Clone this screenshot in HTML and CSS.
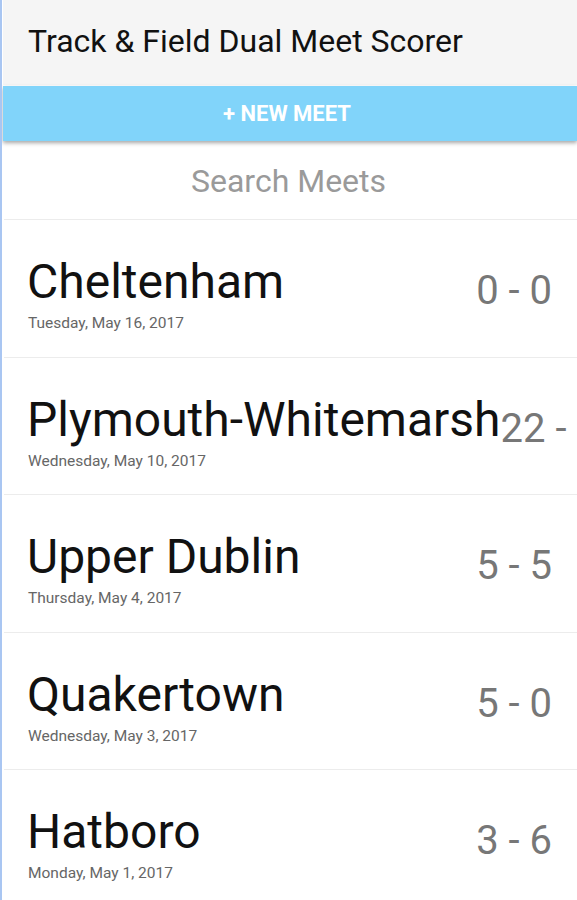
FILE: index.html
```html
<!DOCTYPE html>
<html>
<head>
<meta charset="utf-8">
<link rel="stylesheet" href="styles.css">
</head>
<body>
<div class="app">
  <header class="topbar"><h1 class="title">Track &amp; Field Dual Meet Scorer</h1></header>
  <div class="newmeet">+ NEW MEET</div>
  <div class="search">Search Meets</div>
  <ul class="meets">
    <li class="meet"><div class="info"><div class="name">Cheltenham</div><div class="date">Tuesday, May 16, 2017</div></div><div class="score">0 - 0</div></li>
    <li class="meet"><div class="info"><div class="name">Plymouth-Whitemarsh</div><div class="date">Wednesday, May 10, 2017</div></div><div class="score">22 - 13</div></li>
    <li class="meet"><div class="info"><div class="name">Upper Dublin</div><div class="date">Thursday, May 4, 2017</div></div><div class="score">5 - 5</div></li>
    <li class="meet"><div class="info"><div class="name">Quakertown</div><div class="date">Wednesday, May 3, 2017</div></div><div class="score">5 - 0</div></li>
    <li class="meet"><div class="info"><div class="name">Hatboro</div><div class="date">Monday, May 1, 2017</div></div><div class="score">3 - 6</div></li>
  </ul>
</div>
</body>
</html>
```
FILE: styles.css
```css
html, body { margin: 0; padding: 0; background: #fff; }
body { font-family: Roboto, "Noto Sans", sans-serif; width: 577px; height: 900px; overflow: hidden; }
.app { border-left: 2px solid #a9c6f2; padding-left: 1px; min-height: 900px; overflow: hidden; }
.topbar { height: 85px; background: #f5f5f5; display: flex; align-items: center; padding-left: 25px; }
.title { margin: 0; font-weight: 400; font-size: 32px; color: #111; padding-bottom: 3px; }
.newmeet { height: 55px; margin-top: 1px; background: #81d4fa; color: #fff; font-weight: 700; font-size: 22px; display: flex; align-items: center; justify-content: center; box-shadow: 0 2px 4px rgba(0,0,0,0.35); position: relative; padding-right: 6px; }
.search { display: flex; align-items: center; justify-content: center; color: #9a9a9a; font-size: 32px; border-bottom: 1px solid #ececec; margin-left: 1px; padding-top: 2px; padding-right: 4px; box-sizing: border-box; height: 79px; }
.meets { list-style: none; margin: 0; padding: 0; }
.meet { height: 136.5px; box-sizing: content-box; border-bottom: 1px solid #ececec; display: flex; align-items: flex-start; padding: 0 25px 0 23px; margin-left: 1px; overflow: hidden; }
.info { flex: 1 0 auto; display: flex; flex-direction: column; padding-top: 38px; }
.name { font-size: 48px; color: #111; line-height: 48px; }
.date { font-size: 15.5px; color: #666; line-height: 16px; margin-top: 9px; padding-left: 1px; }
.score { flex: 0 0 auto; font-size: 40px; line-height: 48px; color: #777; white-space: nowrap; margin-top: 47px; }
```
